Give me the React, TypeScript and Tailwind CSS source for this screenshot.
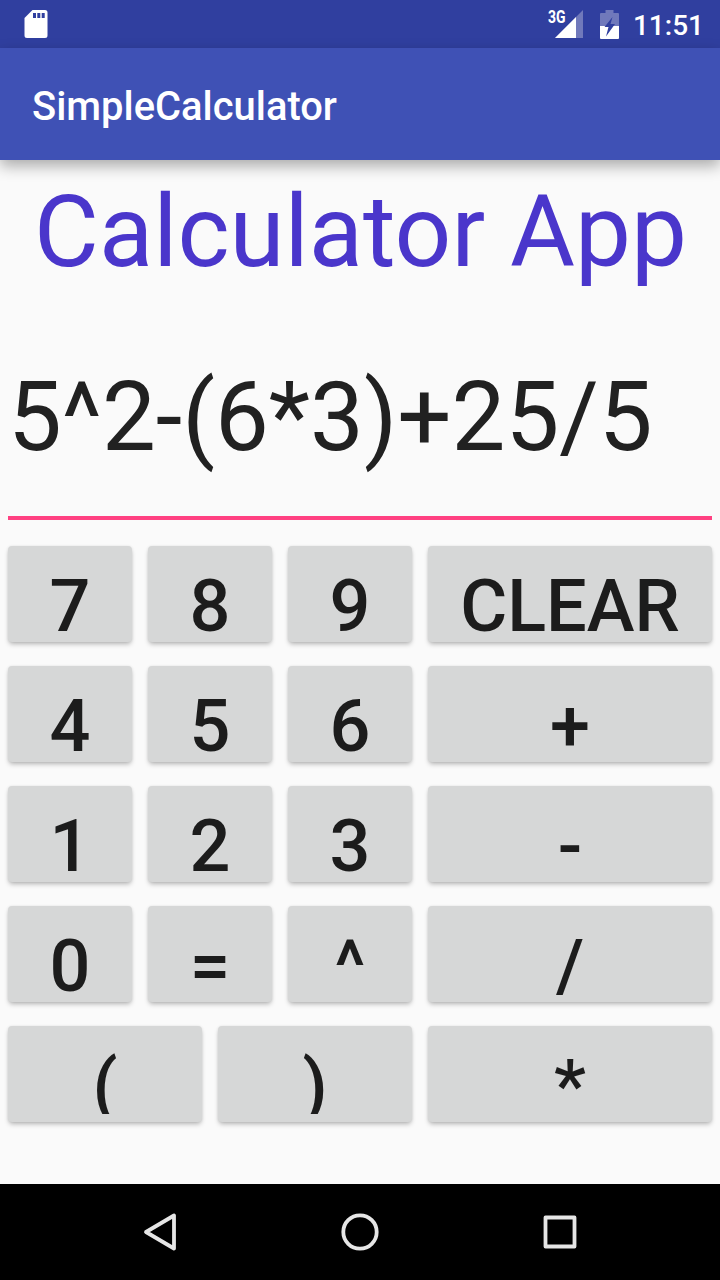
import React from "react";

function Key({ label }: { label: string }) {
  const clip = label === "(" || label === ")" ? "overflow-hidden" : "";
  return (
    <button className="flex h-24 items-start justify-center rounded-[4px] bg-[#d6d7d7] shadow-[0_3px_5px_-1px_rgba(0,0,0,0.28),0_0_3px_rgba(0,0,0,0.08)]">
      <span className={`block h-[88px] pt-[34px] text-[72px] leading-[54px] font-medium text-[#1c1c1c] ${clip}`}>
        {label}
      </span>
    </button>
  );
}

const rows = [
  ["7", "8", "9", "CLEAR"],
  ["4", "5", "6", "+"],
  ["1", "2", "3", "-"],
  ["0", "=", "^", "/"],
];

export default function App() {
  return (
    <div className="flex h-[1280px] w-[720px] flex-col overflow-hidden bg-[#fafafa] font-[Roboto,sans-serif]">
      <div className="flex h-12 shrink-0 items-center bg-[#303f9f] pl-6 pr-4 text-white">
        <svg className="h-7 w-6" viewBox="0 0 24 28" fill="white">
          <path fillRule="evenodd" d="M8.500 0H21q2.500 0 2.500 2.500v23q0 2.500-2.500 2.500H3q-2.500 0-2.500-2.500V8zM9 3v5h3V3zm4.300 0v5h3V3zm4.400 0v5h3V3z" />
        </svg>
        <span className="ml-auto -mt-3.5 w-[18px] origin-left scale-x-[0.8] text-[17.500px] leading-5 font-bold">3G</span>
        <svg className="-ml-3 h-7 w-[29px]" viewBox="0 0 29 28">
          <path d="M29 0v28H1z" fill="#7079bb" />
          <path d="M22 7v21H1z" fill="white" />
        </svg>
        <svg className="ml-4 h-[29px] w-5" viewBox="0 0 20 29">
          <path d="M6.500 0h8v3h4.500q1 0 1 1v12H1V4q0-1 1-1h4.500z" fill="#7079bb" />
          <path d="M1 16h19v12q0 1-1 1H2q-1 0-1-1z" fill="white" />
          <path d="M13.500 7L5.500 17h4l-2.500 9.500L16 14h-4.500z" fill="#303f9f" />
        </svg>
        <span className="ml-[14px] pt-[3px] text-[28px] leading-8 font-medium">11:51</span>
      </div>
      <header className="z-10 flex h-28 shrink-0 items-center bg-[#3f51b5] pt-1.5 pl-8 text-[39.900px] font-medium text-white shadow-[0_6px_14px_rgba(0,0,0,0.32)]">
        SimpleCalculator
      </header>
      <main className="flex h-[1024px] shrink-0 flex-col px-2">
        <h1 className="mt-[14px] h-[120px] pl-[1px] text-center text-[99.700px] leading-[117px] whitespace-nowrap text-[#4a36cb]">Calculator App</h1>
        <div className="mt-[22px] h-[204px] border-b-4 border-[#ff4081] pt-[45px] text-[95.800px] leading-[113px] whitespace-nowrap text-[#212121]">5^2-(6*3)+25/5</div>
        <div className="mt-[26px] flex flex-col gap-6">
          {rows.map((row) => (
            <div key={row[0]} className="grid grid-cols-[124px_124px_124px_284px] gap-4">
              {row.map((k) => <Key key={k} label={k} />)}
            </div>
          ))}
          <div className="grid grid-cols-[194px_194px_284px] gap-4">
            <Key label="(" />
            <Key label=")" />
            <Key label="*" />
          </div>
        </div>
      </main>
      <nav className="flex h-24 shrink-0 items-center justify-center gap-[160px] bg-black">
        <svg className="h-10 w-10" viewBox="0 0 40 40" fill="none" stroke="#e6e6e6" strokeWidth="3.8" strokeLinejoin="round"><path d="M34 3.500v33L6 20z" /></svg>
        <svg className="h-10 w-10" viewBox="0 0 40 40" fill="none" stroke="#e6e6e6" strokeWidth="3.8"><circle cx="20" cy="20" r="16.700" /></svg>
        <svg className="h-10 w-10" viewBox="0 0 40 40" fill="none" stroke="#e6e6e6" strokeWidth="3.8" strokeLinejoin="round"><rect x="5.500" y="5.500" width="29" height="29" /></svg>
      </nav>
    </div>
  );
}
